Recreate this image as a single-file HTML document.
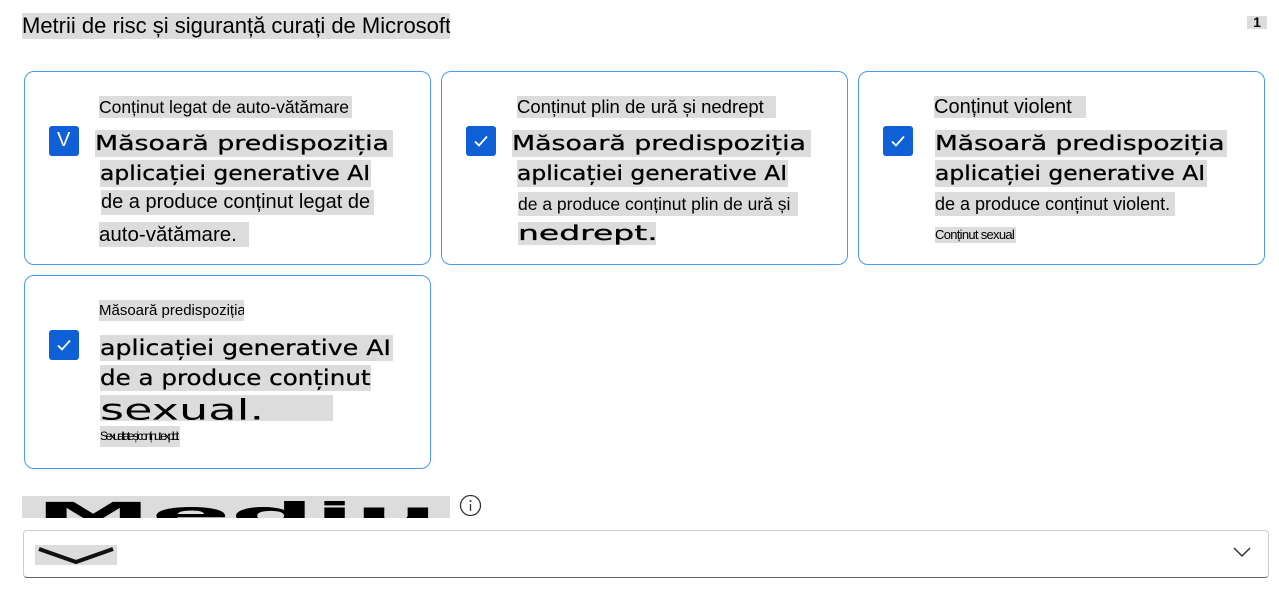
<!DOCTYPE html>
<html><head><meta charset="utf-8"><style>
html,body{margin:0;padding:0;background:#fff;width:1279px;height:591px;overflow:hidden;position:relative}
.t{position:absolute;background:#dcdcdc;white-space:nowrap;overflow:hidden;color:#000;font-family:"DejaVu Sans","Liberation Sans",sans-serif}
.n{font-family:"Liberation Sans",sans-serif}
.card{position:absolute;border:1px solid #4a9cf0;border-radius:10px;box-sizing:border-box}
.cb{position:absolute;width:30px;height:30px;background:#0f5fd7;border-radius:3px}
.s{display:inline-block;transform-origin:0 0}
.w{-webkit-text-stroke:0.3px #000}
</style></head><body>
<div class="t n" style="left:22px;top:13px;width:428px;height:26px;font-size:22px;line-height:26px">Metrii de risc și siguranță curați de Microsoft</div>
<div class="t n" style="left:1247px;top:16px;width:20px;height:13px;font-size:14px;line-height:13px;text-align:center;font-weight:bold">1</div>

<div class="card" style="left:24px;top:71px;width:407px;height:194px"></div>
<div class="card" style="left:441px;top:71px;width:407px;height:194px"></div>
<div class="card" style="left:858px;top:71px;width:407px;height:194px"></div>
<div class="card" style="left:24px;top:275px;width:407px;height:194px"></div>

<div class="cb" style="left:49px;top:126px"><span style="position:absolute;left:8px;top:3px;color:#fff;font:20px 'Liberation Sans',sans-serif">V</span></div>
<svg class="cb" style="left:466px;top:126px" viewBox="0 0 30 30"><path d="M9 15.5l4 4 8-9" stroke="#fff" stroke-width="1.8" fill="none"/></svg>
<svg class="cb" style="left:883px;top:126px" viewBox="0 0 30 30"><path d="M9 15.5l4 4 8-9" stroke="#fff" stroke-width="1.8" fill="none"/></svg>
<svg class="cb" style="left:49px;top:330px" viewBox="0 0 30 30"><path d="M9 15.5l4 4 8-9" stroke="#fff" stroke-width="1.8" fill="none"/></svg>

<!-- card1 -->
<div class="t n" style="left:99px;top:96px;width:253px;height:22px;font-size:17.5px;line-height:22px">Conținut legat de auto-vătămare</div>
<div class="t w" style="left:95px;top:130px;width:298px;height:27px;font-size:20px;line-height:27px"><span class="s" style="transform:scaleX(1.34)">Măsoară predispoziția</span></div>
<div class="t w" style="left:100px;top:160px;width:271px;height:27px;font-size:20px;line-height:27px"><span class="s" style="transform:scaleX(1.17)">aplicației generative AI</span></div>
<div class="t n" style="left:101px;top:190px;width:273px;height:25px;font-size:20px;line-height:25px">de a produce conținut legat de</div>
<div class="t n" style="left:99px;top:222px;width:150px;height:25px;font-size:20.5px;line-height:25px">auto-vătămare.</div>

<!-- card2 -->
<div class="t n" style="left:517px;top:96px;width:259px;height:22px;font-size:18.5px;line-height:22px">Conținut plin de ură și nedrept</div>
<div class="t w" style="left:512px;top:130px;width:299px;height:27px;font-size:20px;line-height:27px"><span class="s" style="transform:scaleX(1.34)">Măsoară predispoziția</span></div>
<div class="t w" style="left:517px;top:160px;width:271px;height:27px;font-size:20px;line-height:27px"><span class="s" style="transform:scaleX(1.17)">aplicației generative AI</span></div>
<div class="t n" style="left:518px;top:192px;width:280px;height:24px;font-size:17.5px;line-height:24px">de a produce conținut plin de ură și</div>
<div class="t w" style="left:518px;top:222px;width:138px;height:23px;font-size:20px;line-height:23px"><span class="s" style="transform:scaleX(1.65)">nedrept.</span></div>

<!-- card3 -->
<div class="t n" style="left:934px;top:96px;width:152px;height:22px;font-size:20px;line-height:22px">Conținut violent</div>
<div class="t w" style="left:935px;top:130px;width:292px;height:27px;font-size:20px;line-height:27px"><span class="s" style="transform:scaleX(1.32)">Măsoară predispoziția</span></div>
<div class="t w" style="left:935px;top:160px;width:272px;height:27px;font-size:20px;line-height:27px"><span class="s" style="transform:scaleX(1.17)">aplicației generative AI</span></div>
<div class="t n" style="left:935px;top:192px;width:240px;height:24px;font-size:18px;line-height:24px">de a produce conținut violent.</div>
<div class="t n" style="left:935px;top:227px;width:81px;height:16px;font-size:13px;line-height:16px;letter-spacing:-0.7px">Conținut sexual</div>

<!-- card4 -->
<div class="t n" style="left:99px;top:300px;width:145px;height:21px;font-size:15px;line-height:21px">Măsoară predispoziția</div>
<div class="t w" style="left:100px;top:335px;width:293px;height:26px;font-size:21px;line-height:26px"><span class="s" style="transform:scaleX(1.2)">aplicației generative AI</span></div>
<div class="t w" style="left:100px;top:365px;width:271px;height:26px;font-size:21px;line-height:26px"><span class="s" style="transform:scaleX(1.17)">de a produce conținut</span></div>
<div class="t" style="left:100px;top:395px;width:233px;height:26px;font-size:22px;line-height:26px"><span class="s" style="transform:scale(2.1,1.3);margin-top:-4px">sexual.</span></div>
<div class="t n" style="left:100px;top:426px;width:80px;height:21px;font-size:12px;line-height:21px;letter-spacing:-2.5px">Sexualitate și conținut explicit</div>

<!-- Mediu -->
<div class="t" style="left:22px;top:496px;width:428px;height:22px;font-size:30px;line-height:30px"><span class="s" style="transform:scaleX(3.9);margin-left:13px;margin-top:4px;font-weight:bold">Mediu</span></div>
<svg style="position:absolute;left:459px;top:494px" width="23" height="23" viewBox="0 0 23 23"><circle cx="11.5" cy="11.5" r="10" stroke="#333" stroke-width="1.3" fill="none"/><circle cx="11.5" cy="7" r="1" fill="#333"/><path d="M11.5 10v7" stroke="#333" stroke-width="1.3"/></svg>

<div style="position:absolute;left:23px;top:530px;width:1246px;height:48px;box-sizing:border-box;border:1px solid #ccc;border-bottom:1px solid #666;border-radius:4px"></div>
<div class="t" style="left:35px;top:545px;width:82px;height:20px"><svg width="82" height="20" viewBox="0 0 82 20"><path d="M4 4 L41 17 L78 4" stroke="#111" stroke-width="4" fill="none"/></svg></div>
<svg style="position:absolute;left:1233px;top:546px" width="18" height="12" viewBox="0 0 18 12"><path d="M1 2l8 8 8-8" stroke="#333" stroke-width="1.5" fill="none"/></svg>
</body></html>
